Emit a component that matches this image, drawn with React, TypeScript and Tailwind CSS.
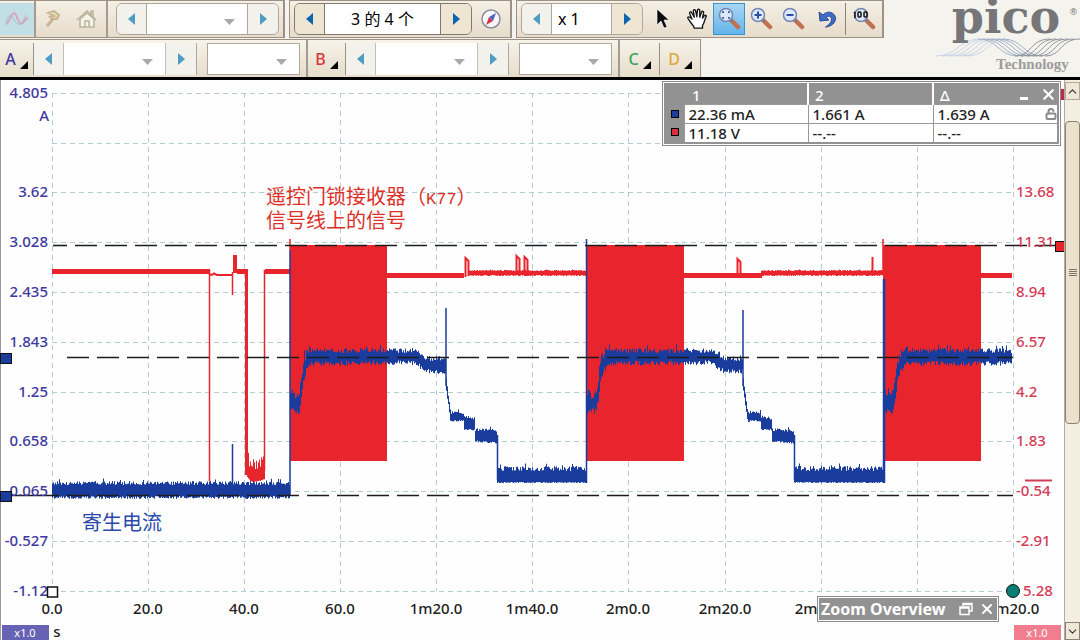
import React from 'react';
import { ChevronDown, ChevronUp, LockOpen, X } from 'lucide-react';

const BLUE = '#1a3c9c';
const RED = '#e8242c';

const timeTicks = [
  { x: 52, label: '0.0' },
  { x: 148, label: '20.0' },
  { x: 244, label: '40.0' },
  { x: 340, label: '60.0' },
  { x: 436, label: '1m20.0' },
  { x: 532, label: '1m40.0' },
  { x: 628, label: '2m0.0' },
  { x: 725, label: '2m20.0' },
  { x: 821, label: '2m40.0' },
  { x: 917, label: '' },
  { x: 1013, label: '3m20.0' },
];

const levels = [
  { y: 93, a: '4.805', b: '' },
  { y: 143, a: '', b: '' },
  { y: 192, a: '3.62', b: '13.68' },
  { y: 242, a: '3.028', b: '11.31' },
  { y: 292, a: '2.435', b: '8.94' },
  { y: 342, a: '1.843', b: '6.57' },
  { y: 392, a: '1.25', b: '4.2' },
  { y: 441, a: '0.658', b: '1.83' },
  { y: 491, a: '0.065', b: '-0.54' },
  { y: 541, a: '-0.527', b: '-2.91' },
  { y: 591, a: '-1.12', b: '5.28' },
];

// x, top, bottom of the trace envelope
type Edge = [number, number, number];

// small repeatable noise so the traces look the same on every render
const noise = (n: number) => {
  const v = Math.sin(n * 127.1 + 11.7) * 43758.5453;
  return v - Math.floor(v);
};

const envelope = (edges: Edge[], up: number, down: number) => {
  const top: string[] = [];
  const bottom: string[] = [];
  for (let i = 0; i < edges.length - 1; i++) {
    const [x0, t0, b0] = edges[i];
    const [x1, t1, b1] = edges[i + 1];
    for (let x = x0; x < x1; x += 1) {
      const k = (x - x0) / (x1 - x0);
      const spike = noise(x * 3) > 0.93 ? 1.8 : 1;
      const t = t0 + (t1 - t0) * k - noise(x) * up * spike;
      const b = b0 + (b1 - b0) * k + noise(x + 500) * down;
      top.push(`${x},${t.toFixed(1)} ${x + 1},${t.toFixed(1)}`);
      bottom.unshift(`${x + 1},${b.toFixed(1)} ${x},${b.toFixed(1)}`);
    }
  }
  return [...top, ...bottom].join(' ');
};

const shift = (edges: Edge[], dx: number): Edge[] => edges.map(([x, t, b]) => [x + dx, t, b]);

const rise: Edge[] = [
  [290, 396, 408],
  [294, 400, 408],
  [299, 398, 408],
  [301, 382, 396],
  [303, 366, 378],
  [306, 358, 368],
  [310, 353, 363],
];
const plateau: Edge[] = [
  [310, 353, 361],
  [414, 353, 360],
  [421, 357, 365],
  [427, 361, 369],
  [446, 361, 369],
];
const lastPlateau: Edge[] = [
  [904, 353, 361],
  [1012, 353, 361],
];
const fall: Edge[] = [
  [446, 380, 390],
  [448, 396, 404],
  [450, 412, 419],
  [451, 414, 420],
  [463, 414, 420],
  [464, 418, 428],
  [474, 420, 429],
  [475, 431, 440],
  [497, 432, 442],
];
const idle: Edge[] = [
  [497, 471, 482],
  [587, 471, 482],
];

const bursts = [
  { x: 290, w: 97 },
  { x: 587, w: 97 },
  { x: 883, w: 98 },
];

const Scope: React.FC = () => (
  <svg viewBox="0 80 1064 560" className="block w-full h-auto font-['Noto_Sans','Noto_Sans_CJK_SC',sans-serif]" role="img" aria-label="A / V">
    <rect x="0" y="80" width="1064" height="560" fill="#fefefe" />
    <path d="M.5 80V640" stroke="#999" />

    <g stroke="#b4cdd2" strokeDasharray="5 4" fill="none">
      {levels.map((l) => (
        <path key={l.y} d={`M52 ${l.y}.5H1013`} />
      ))}
      {timeTicks.map((t) => (
        <path key={t.x} d={`M${t.x}.5 93V591`} />
      ))}
    </g>

    {/* channel B */}
    <g fill={RED}>
      {bursts.map((b) => (
        <rect key={b.x} x={b.x} y="245" width={b.w} height="216" />
      ))}
      <rect x="52" y="269" width="158" height="5" />
      <rect x="237" y="269" width="11" height="5" />
      <rect x="265" y="269" width="25" height="5" />
      <rect x="245" y="270" width="3" height="205" />
      <rect x="387" y="273" width="77" height="5" />
      <rect x="684" y="273" width="78" height="5" />
      <rect x="981" y="273" width="31" height="5" />
      <polygon points={envelope([[469, 271, 275], [587, 271, 275]], 1, 1)} />
      <polygon points={envelope([[761, 271, 275], [883, 271, 275]], 1, 1)} />
      <polygon points={envelope([[247, 456, 476], [250, 472, 481], [256, 470, 481], [261, 466, 480], [265, 456, 478]], 12, 1)} />
      <rect x="233" y="255" width="4" height="18" />
    </g>
    <g stroke={RED} fill="none">
      <path d="M209.5 270V481M232.500 272V295M264.500 270V470M290 239V250M883 239V275" strokeWidth="1.5" />
      <path d="M209 274l3 1 2-1.500 3 1.500H233" strokeWidth="2" />
      <path d="M465.500 277V258l3 3V276M516.500 275V256l3 3V276M524.500 275V257l3 3V276M737.500 277V259l3 3V276M872.500 275V257" strokeWidth="2" />
    </g>

    {/* channel A */}
    <g fill={BLUE}>
      <polygon points={envelope([[52, 485, 496], [290, 485, 496]], 4, 3)} />
      {[0, 297].map((dx) => (
        <React.Fragment key={dx}>
          <polygon points={envelope(shift(rise, dx), 9, 6)} />
          <polygon points={envelope(shift(plateau, dx), 5, 5)} />
          <polygon points={envelope(shift(fall, dx), 3, 2)} />
          <polygon points={envelope(shift(idle, dx), 5, 1)} />
        </React.Fragment>
      ))}
      <polygon points={envelope(shift(rise, 594), 9, 6)} />
      <polygon points={envelope(lastPlateau, 5, 5)} />
    </g>
    <g stroke={BLUE} fill="none" strokeWidth="1.500">
      <path d="M290 250V495M446 308V386M497.500 435V480M586.500 239V483M743 310V386M794.500 435V480M232.500 444V485" />
      <path d="M884 279V483" strokeWidth="2.500" />
    </g>

    {/* rulers */}
    <g stroke="#1c1c1c" strokeWidth="1.600" fill="none">
      <path d="M53 245.500H67" />
      <path d="M75 245.500H1060" strokeDasharray="22 8" />
      <path d="M67 357.500H1013" strokeDasharray="22 8" />
      <path d="M67 495.500H1013" strokeDasharray="22 8" />
      <path d="M10 495.500H59" />
    </g>

    <g fontSize="15" fontWeight="500" fill="#4038a0" textAnchor="end">
      {levels.map((l) => l.a && (
        <text key={l.y} x="48" y={l.y + 5}>{l.a}</text>
      ))}
      <text x="49" y="121">A</text>
    </g>
    <g fontSize="15" fontWeight="500" fill="#d43b55">
      {levels.map((l) => l.b && (
        <text key={l.y} x={l.b === '5.28' ? 1023 : 1016} y={l.y + 5}>{l.b}</text>
      ))}
    </g>
    <g fontSize="15" fontWeight="500" fill="#222" textAnchor="middle">
      {timeTicks.map((t) => t.label && (
        <text key={t.x} x={t.x} y="614">{t.label}</text>
      ))}
      <text x="57" y="637">s</text>
    </g>

    {/* ruler and time handles */}
    <rect x=".5" y="353.500" width="11" height="10" fill={BLUE} stroke="#111" />
    <rect x=".5" y="491.500" width="11" height="10" fill={BLUE} stroke="#111" />
    <rect x="1055.500" y="241.500" width="9" height="10" fill={RED} stroke="#111" />
    <rect x="1061" y="89" width="3" height="11" fill="#c02848" />
    <path d="M1025 480.500H1052" stroke="#d43b55" strokeWidth="2" />
    <rect x="47.500" y="587" width="10" height="10" fill="#fff" stroke="#111" strokeWidth="1.500" />
    <circle cx="1013" cy="591" r="6.500" fill="#0b7d74" stroke="#111" />

    <g fontSize="20" className="font-['Noto_Sans_CJK_SC',sans-serif]">
      <g fill="#dc3028">
        <text x="266" y="204">
          遥控门锁接收器（<tspan fontSize="17" className="font-['Liberation_Mono',monospace]">K77</tspan>）
        </text>
        <text x="266" y="228">信号线上的信号</text>
      </g>
      <text x="82" y="530" fill="#2b49ad">寄生电流</text>
    </g>

    <g fontSize="11" fill="#fff" textAnchor="middle">
      <rect x="2" y="625" width="47" height="15" fill="#6663b4" />
      <text x="25" y="637">x1.0</text>
      <rect x="1014" y="625" width="47" height="15" fill="#f07e8e" />
      <text x="1037" y="637">x1.0</text>
    </g>
  </svg>
);

const Arrow: React.FC<{ dir: 'left' | 'right'; strong?: boolean }> = ({ dir, strong }) => (
  <svg width="8" height="12" viewBox="0 0 8 12" fill={strong ? '#0b66b0' : '#4f9cc4'}>
    <path d={dir === 'left' ? 'M7 0v12L0 6z' : 'M1 0v12l7-6z'} />
  </svg>
);

const StepButton: React.FC<{ dir: 'left' | 'right'; strong?: boolean }> = ({ dir, strong }) => (
  <button
    aria-label={dir === 'left' ? 'Previous' : 'Next'}
    className={`flex w-[30px] shrink-0 items-center justify-center ${strong ? 'bg-[#efe5d3]' : 'bg-[#f3f1ec]'}`}
  >
    <Arrow dir={dir} strong={strong} />
  </button>
);

const Combo: React.FC<{ label: string; className: string }> = ({ label, className }) => (
  <div className={`relative flex shrink-0 bg-white ${className}`}>
    <select aria-label={label} className="w-full appearance-none bg-transparent outline-none" />
    <svg width="11" height="6" viewBox="0 0 11 6" className="pointer-events-none absolute right-3 top-1/2">
      <path d="M0 0h11L5.500 6z" fill="#a9a9a9" />
    </svg>
  </div>
);

const ChannelButton: React.FC<{ name: string; className: string }> = ({ name, className }) => (
  <button className={`flex shrink-0 items-center justify-center gap-1 border-r border-[#9b9084] font-medium ${className}`}>
    <span>{name}</span>
    <svg width="8" height="8" viewBox="0 0 8 8" className="mt-3">
      <path d="M8 0v8H0z" fill="#000" />
    </svg>
  </button>
);

const Magnifier: React.FC<{ children?: React.ReactNode }> = ({ children }) => (
  <svg width="24" height="24" viewBox="0 0 24 24" fill="none">
    <path d="M14 13l7 7" stroke="#c2714f" strokeWidth="4.500" strokeLinecap="round" />
    <path d="M13 12l3 3" stroke="#7d7d85" strokeWidth="2" />
    <circle cx="9" cy="8" r="6.500" fill="#dce9f8" stroke="#7787b3" strokeWidth="1.500" />
    {children}
  </svg>
);

const Separator: React.FC = () => <div className="w-[2px] shrink-0 self-stretch bg-[#a39a90]" />;

const toolButton = 'flex h-8 w-8 shrink-0 items-center justify-center';
const groupBox = 'flex h-8 shrink-0 overflow-hidden rounded-md border divide-x';

const MainToolbar: React.FC = () => (
  <div className="flex h-[38px] items-stretch">
    <div className="flex items-center border-y border-r-2 border-[#9d9186] bg-linear-to-b from-[#f5f0e5] to-[#e6dccb]">
      <button aria-label="Scope" className="flex h-8 w-[34px] items-center justify-center bg-[#c3dfe6]">
        <svg width="26" height="20" viewBox="0 0 26 20" fill="none" strokeWidth="2">
          <path d="M2 15C5 15 7 4 10 4s4 11 7 11 4-6 7-6" stroke="#d7a6bb" />
          <path d="M2 13c3-8 5-8 8-2s8 6 12-5" stroke="#a8b7d2" strokeWidth="1" />
        </svg>
      </button>
      <Separator />
      <button aria-label="Wizard" className="flex h-8 w-9 items-center justify-center">
        <svg width="20" height="20" viewBox="0 0 20 20" fill="none" stroke="#c6b493" strokeWidth="2">
          <path d="M4 4l6-2 5 4-2 4H8l-2-2 4-1z" fill="#e9ddb5" />
          <path d="M10 9L3 17" strokeWidth="3" />
        </svg>
      </button>
      <button aria-label="Home" className="flex h-8 w-[34px] items-center justify-center pr-1">
        <svg width="22" height="20" viewBox="0 0 22 20" fill="none" stroke="#b9b39d" strokeWidth="1.500">
          <path d="M1 11L11 2l9 9M15 6V2h2v6" />
          <path d="M4 10v8h14v-8l-7-6z" fill="#f5f3ea" />
          <path d="M9 18v-6h4v6" />
        </svg>
      </button>
      <Separator />
      <div className={`${groupBox} ml-2 mr-1 border-[#aea59b] divide-[#aea59b]`}>
        <StepButton dir="left" />
        <Combo label="Setup" className="w-[101px]" />
        <StepButton dir="right" />
      </div>
    </div>

    <div className="ml-1 flex items-center border-y border-r-2 border-l border-[#9d9186] bg-linear-to-b from-[#f5f0e5] to-[#e6dccb]">
      <div className={`${groupBox} ml-1 border-[#84786e] divide-[#84786e]`}>
        <StepButton dir="left" strong />
        <input aria-label="Buffer" defaultValue="3 的 4 个" className="w-[116px] bg-white text-center text-base outline-none" />
        <StepButton dir="right" strong />
      </div>
      <button aria-label="Navigator" className="flex h-8 w-[38px] items-center justify-center">
        <svg width="22" height="22" viewBox="0 0 22 22">
          <circle cx="11" cy="11" r="9" fill="#f6f6fb" stroke="#8d8c9c" strokeWidth="1.500" />
          <path d="M16 5l-3 8-4-4z" fill="#4a63b8" />
          <path d="M6 17l3-8 4 4z" fill="#cf3946" />
        </svg>
      </button>
    </div>

    <div className="ml-1 flex items-center border-y border-r-2 border-l border-[#9d9186] bg-linear-to-b from-[#f5f0e5] to-[#e6dccb]">
      <div className={`${groupBox} ml-1 border-[#aea59b] divide-[#aea59b]`}>
        <StepButton dir="left" />
        <input aria-label="Zoom factor" defaultValue="x 1" className="w-[60px] bg-white pl-1.5 text-base outline-none" />
        <StepButton dir="right" strong />
      </div>
      <button aria-label="Pointer" className="flex h-8 w-[38px] items-center justify-center">
        <svg width="14" height="22" viewBox="0 0 14 22">
          <path d="M2 1v16l4-4 3 7 3-1-3-7h5z" fill="#0b0b0b" stroke="#fff" strokeWidth=".6" />
        </svg>
      </button>
      <button aria-label="Hand" className={toolButton}>
        <svg width="22" height="22" viewBox="0 0 24 24" fill="#fff" stroke="#151515" strokeWidth="1.500" strokeLinejoin="round">
          <path d="M9 22c0-3-3-4-5-8-1-2-3-3-2-4 1.500-1.300 3 .5 4.500 2L4 6c-.6-1.800 1.600-2.500 2.300-.8L9 10 8 3.500C7.800 1.500 10 1.300 10.500 3l1.300 6.500.7-7c.2-1.600 2.400-1.500 2.500.2L15 10l2-5.500c.6-1.500 2.500-.9 2.200.8L18 11l2-2.500c1-1.300 2.600-.3 2 1C20 13 20 17 18 19v3z" />
        </svg>
      </button>
      <button aria-label="Zoom area" className="flex h-8 w-8 items-center justify-center border border-[#3a92cf] bg-linear-to-b from-[#a8d6f2] to-[#62b4ea]">
        <Magnifier>
          <path d="M7 5H6v1M11 5h1v1M7 11H6v-1M11 11h1v-1" stroke="#2c4ea0" strokeWidth="1.500" />
        </Magnifier>
      </button>
      <button aria-label="Zoom in" className={toolButton}>
        <Magnifier>
          <path d="M5.500 8h7M9 4.500v7" stroke="#2c4ea0" strokeWidth="2" />
        </Magnifier>
      </button>
      <button aria-label="Zoom out" className={toolButton}>
        <Magnifier>
          <path d="M5.500 8h7" stroke="#2c4ea0" strokeWidth="2" />
        </Magnifier>
      </button>
      <button aria-label="Undo zoom" className="flex h-8 w-9 items-center justify-center">
        <svg width="20" height="20" viewBox="0 0 20 20">
          <path d="M2 3l1 9 9-1-3-2.500c2-2 6-1.500 5.500 2.500-.3 3-3 5-6 7 6-.5 10-4 10-9C18 3 10 1 6 6z" fill="#3f6cc4" stroke="#2b4a94" />
        </svg>
      </button>
      <div className="h-8 w-px bg-[#8c8177]" />
      <button aria-label="Zoom 100%" className="flex h-8 w-9 items-center justify-center">
        <Magnifier>
          <path d="M3 5v6M2 6l1-1" stroke="#111" strokeWidth="1.500" />
          <rect x="6" y="5" width="3" height="5" rx="1" stroke="#111" strokeWidth="1.500" />
          <rect x="12" y="5" width="3" height="5" rx="1" stroke="#111" strokeWidth="1.500" />
        </Magnifier>
      </button>
    </div>
  </div>
);

const channelStep = 'flex h-8 shrink-0 border-r border-[#aea59b] divide-x divide-[#c4bdb3]';

const ChannelToolbar: React.FC = () => (
  <div className="flex h-[39px] items-stretch">
    <div className="mt-px flex items-center border-t border-r border-[#9d9186] bg-linear-to-b from-[#f7f3e9] to-[#e6dccb] text-base">
      <ChannelButton name="A" className="h-8 w-[34px] text-[#4038a0]" />
      <div className={channelStep}>
        <StepButton dir="left" />
        <Combo label="Range A" className="w-[102px]" />
        <StepButton dir="right" />
      </div>
      <Combo label="Coupling A" className="ml-2.5 mr-1.5 h-8 w-[93px] border border-[#aea59b]" />
      <Separator />
      <ChannelButton name="B" className="h-8 w-[38px] text-[#d8343c]" />
      <div className={channelStep}>
        <StepButton dir="left" />
        <Combo label="Range B" className="w-[102px]" />
        <StepButton dir="right" />
      </div>
      <Combo label="Coupling B" className="ml-2.5 mr-1.5 h-8 w-[93px] border border-[#aea59b]" />
      <Separator />
      <ChannelButton name="C" className="h-8 w-10 text-[#38a05a]" />
      <ChannelButton name="D" className="h-8 w-10 border-r-0 text-[#d9aa3a]" />
    </div>
  </div>
);

const Logo: React.FC = () => (
  <svg width="150" height="77" viewBox="930 0 150 77" className="shrink-0" fill="none">
    <g stroke="#c6d5e8">
      {[0, 1, 2, 3, 4, 5].map((i) => (
        <path key={i} d={`M${936 + i * 6} 56C${958 + i * 6} 56 ${958 + i * 6} 39 ${980 + i * 5} 39`} />
      ))}
    </g>
    <g stroke="#a3b1c8">
      {[0, 1, 2, 3, 4, 5].map((i) => (
        <path key={i} d={`M${978 + i * 5} 39C${998 + i * 5} 39 ${998 + i * 5} 56 ${1018 + i * 5} 56`} />
      ))}
    </g>
    <g stroke="#8b919b">
      {[0, 1, 2, 3, 4, 5].map((i) => (
        <path key={i} d={`M${1015 + i * 6} 56C${1032 + i * 6} 56 ${1030 + i * 6} 39 ${1050 + i * 6} 39`} />
      ))}
    </g>
    <text x="1006" y="33" textAnchor="middle" fontSize="46" fontWeight="700" fill="#767678" className="font-['DejaVu_Serif',serif]">pico</text>
    <text x="1069" y="15" fontSize="9" fill="#767678" className="font-['DejaVu_Sans',sans-serif]">®</text>
    <text x="996" y="69" fontSize="15" fontWeight="700" fill="#9b9b9b" className="font-['Liberation_Serif',serif]">Technology</text>
  </svg>
);

const Swatch: React.FC<{ color: string }> = ({ color }) => (
  <td className="w-[19px] bg-[#929292]">
    <div className={`mx-auto h-2 w-2 border border-black ${color}`} />
  </td>
);

const RulerLegend: React.FC = () => (
  <div className="absolute right-[3px] top-px border border-[#8a8a8a] bg-white p-px">
    <table className="border-collapse border-2 border-[#929292] bg-white text-left text-[15px] leading-[18px] font-medium text-[#222]">
      <thead className="bg-[#929292] text-white">
        <tr className="h-5 align-bottom">
          <td />
          <th className="w-[124px] pl-2 font-medium">1</th>
          <th className="w-[125px] border-l-2 border-white pl-1.5 font-medium">2</th>
          <th className="w-[125px] border-l-2 border-white pl-1.5 font-medium">
            <div className="flex items-center">
              <span className="grow">Δ</span>
              <button aria-label="Minimize" className="mt-2 mr-3 h-[3px] w-2 bg-white" />
              <button aria-label="Close legend"><X size={17} strokeWidth={3} /></button>
            </div>
          </th>
        </tr>
      </thead>
      <tbody>
        <tr>
          <Swatch color="bg-[#1a3c9c]" />
          <td className="border border-[#999] pl-1">22.36 mA</td>
          <td className="border border-[#999] pl-1">1.661 A</td>
          <td className="border border-[#999] pl-1">
            <div className="flex items-center justify-between">
              <span>1.639 A</span>
              <LockOpen size={12} strokeWidth={4} className="text-[#8c8c8c]" />
            </div>
          </td>
        </tr>
        <tr>
          <Swatch color="bg-[#d8303c]" />
          <td className="border border-[#999] pl-1">11.18 V</td>
          <td className="border border-[#999] pl-1">--.--</td>
          <td className="border border-[#999] pl-1">--.--</td>
        </tr>
      </tbody>
    </table>
  </div>
);

const ZoomOverview: React.FC = () => (
  <div className="absolute bottom-[18px] right-[65px] border border-[#8a8a8a] bg-white p-px">
    <div className="flex h-[22px] w-[178px] items-center bg-[#929292] px-0.5 text-white">
      <h2 className="grow whitespace-nowrap text-base font-bold">Zoom Overview</h2>
      <button aria-label="Restore" className="mr-1.5">
        <svg width="14" height="14" viewBox="0 0 14 14" fill="none" stroke="#fff" strokeWidth="1.500">
          <path d="M4 4V1.500h9V9h-3M4 2.500h9M1 5h9v7.500H1zM1 6h9" />
        </svg>
      </button>
      <button aria-label="Close overview"><X size={16} strokeWidth={3} /></button>
    </div>
  </div>
);

const ScrollColumn: React.FC = () => (
  <div className="flex w-4 shrink-0 flex-col border-l border-[#b4ab9c] bg-[#f4eee0]">
    <button aria-label="Scroll up" className="mt-0.5 flex h-[18px] items-center justify-center border border-[#b4a994] bg-[#efe8d8]">
      <ChevronUp size={13} strokeWidth={2} className="shrink-0 text-[#333]" />
    </button>
    <div className="flex grow flex-col">
      <div className="basis-[4%]" />
      <div className="flex basis-[58%] flex-col items-center justify-center gap-px rounded-sm border border-[#8b8273] bg-[#ebe2cd]">
        <div className="h-px w-2 bg-[#7c7464]" />
        <div className="h-px w-2 bg-[#7c7464]" />
        <div className="h-px w-2 bg-[#7c7464]" />
        <div className="h-px w-2 bg-[#7c7464]" />
      </div>
    </div>
    <button aria-label="Scroll down" className="flex h-[18px] items-center justify-center border border-[#8b8273] bg-[#efe8d8]">
      <ChevronDown size={13} strokeWidth={2} className="shrink-0 text-[#333]" />
    </button>
  </div>
);

const App: React.FC = () => {
  return (
    <div className="min-h-screen bg-white font-['Noto_Sans','Noto_Sans_CJK_SC',sans-serif]">
      <header className="flex justify-between border-b-[3px] border-black bg-[#f5f3ee]">
        <div>
          <MainToolbar />
          <ChannelToolbar />
        </div>
        <Logo />
      </header>
      <main className="flex">
        <section className="relative min-w-0 grow">
          <Scope />
          <RulerLegend />
          <ZoomOverview />
        </section>
        <ScrollColumn />
      </main>
    </div>
  );
};

export default App;
